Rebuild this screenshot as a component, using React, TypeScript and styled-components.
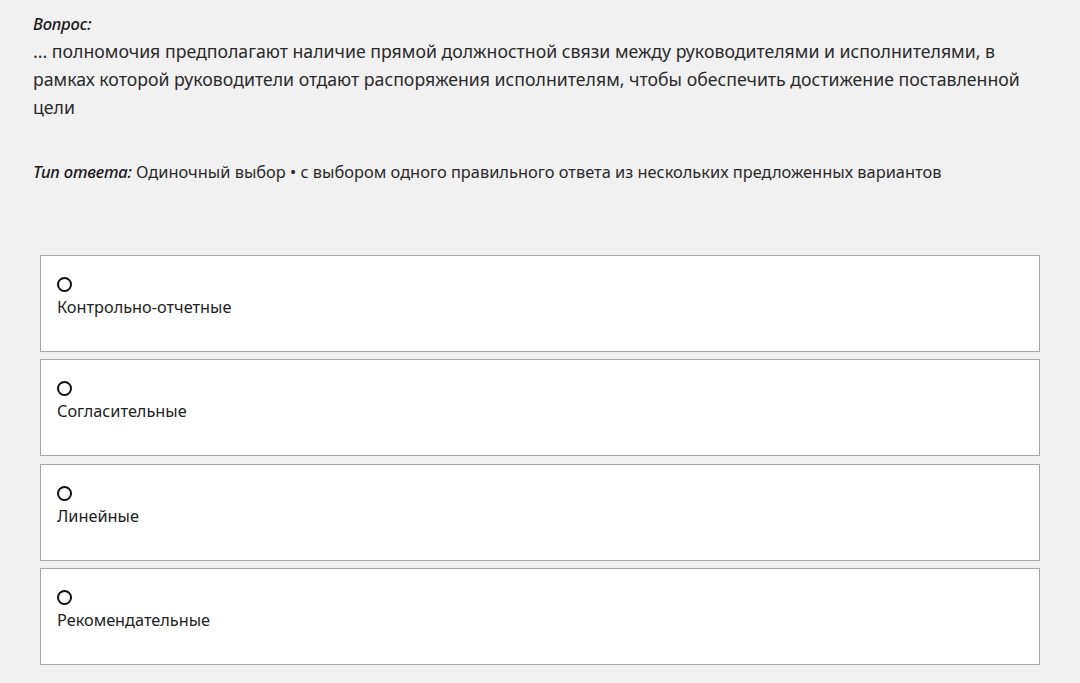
import React, { useState } from "react";
import styled, { createGlobalStyle } from "styled-components";

const GlobalStyle = createGlobalStyle`
  html, body {
    margin: 0;
    padding: 0;
    background: #f1f1f1;
  }
  body {
    font-family: "Noto Sans", "Open Sans", sans-serif;
    color: #222;
  }
`;

const options: string[] = [
  "Контрольно-отчетные",
  "Согласительные",
  "Линейные",
  "Рекомендательные",
];

const App = () => {
  const [selected, setSelected] = useState<number | null>(null);

  return (
    <>
      <GlobalStyle />
      <Page>
        <Label>Вопрос:</Label>
        <QuestionText>
          ... полномочия предполагают наличие прямой должностной связи между
          руководителями и исполнителями, в рамках которой руководители отдают
          распоряжения исполнителям, чтобы обеспечить достижение поставленной
          цели
        </QuestionText>
        <AnswerType>
          <Label>Тип ответа:</Label> Одиночный выбор • с выбором одного
          правильного ответа из нескольких предложенных вариантов
        </AnswerType>
        <OptionList>
          {options.map((el, i) => (
            <OptionCard key={el} onClick={() => setSelected(i)}>
              <Radio $checked={selected === i} />
              <OptionText>{el}</OptionText>
            </OptionCard>
          ))}
        </OptionList>
      </Page>
    </>
  );
};

export default App;

const Page = styled.div`
  padding: 12px 40px 0 33px;
`;

const Label = styled.span`
  font-style: italic;
  font-weight: 500;
  font-size: 16.6px;
  letter-spacing: -0.2px;
  color: #1a1a1a;
`;

const QuestionText = styled.div`
  margin-top: 2px;
  font-size: 17.7px;
  line-height: 28px;
  color: #2a2a2a;
  width: 1000px;
`;

const AnswerType = styled.div`
  margin-top: 39px;
  font-size: 16.4px;
  line-height: 24px;
  color: #2a2a2a;
`;

const OptionList = styled.div`
  margin: 71px 0 0 7px;
  display: flex;
  flex-direction: column;
  gap: 7.4px;
`;

const OptionCard = styled.div`
  box-sizing: border-box;
  width: 1000px;
  height: 97px;
  background: #fff;
  border: 1px solid #a6a6a6;
  padding: 21px 16px 0;
  cursor: pointer;
`;

const Radio = styled.div<{ $checked: boolean }>`
  box-sizing: border-box;
  width: 15px;
  height: 15px;
  border: 2px solid #111;
  border-radius: 50%;
  background: ${(p) => (p.$checked ? "radial-gradient(#111 35%, #fff 40%)" : "#fff")};
`;

const OptionText = styled.div`
  margin-top: 4px;
  font-size: 16.3px;
  line-height: 22px;
  color: #222;
`;
